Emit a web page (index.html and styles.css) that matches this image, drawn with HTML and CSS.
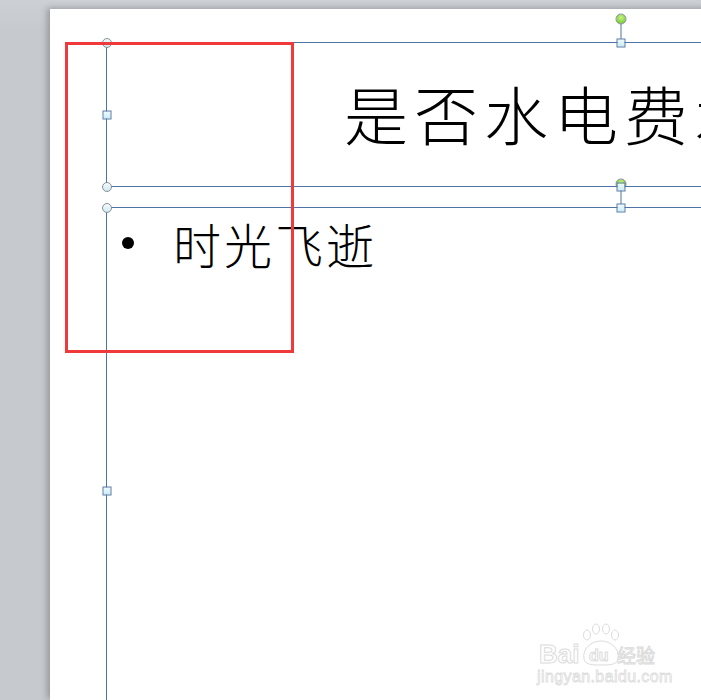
FILE: index.html
```html
<!DOCTYPE html>
<html lang="zh-CN">
<head>
<meta charset="utf-8">
<title>Slide editor</title>
<link rel="stylesheet" href="styles.css">
</head>
<body>
<div class="workspace">
  <div class="slide">
    <div class="placeholder title-box">
      <div class="title-text">是否水电费水电费</div>
      <span class="connector conn-title"></span>
      <span class="handle rot rot-title"></span>
      <span class="handle circ h-tl"></span>
      <span class="handle sq h-tm"></span>
      <span class="handle sq h-ml"></span>
      <span class="handle circ h-bl"></span>
      <span class="handle sq h-bm"></span>
    </div>
    <div class="placeholder body-box">
      <div class="bullet-row">
        <span class="bullet"></span>
        <span class="bullet-text">时光飞逝</span>
      </div>
      <span class="connector conn-body"></span>
      <span class="handle rot rot-body"></span>
      <span class="handle circ b-tl"></span>
      <span class="handle sq b-tm"></span>
      <span class="handle sq b-ml"></span>
    </div>
    <div class="highlight"></div>
  </div>
  <svg class="watermark" width="140" height="76" viewBox="0 0 140 76">
    <g fill="#ffffff" stroke="#dcdcdc" stroke-width="1">
      <ellipse cx="52" cy="14" rx="3.5" ry="5"/>
      <ellipse cx="61" cy="8" rx="3.5" ry="5"/>
      <ellipse cx="71" cy="8" rx="3.5" ry="5"/>
      <ellipse cx="80" cy="14" rx="3.5" ry="5"/>
      <path d="M49 38 C47 28 56 20 66 20 C76 20 85 28 83 38 C82 44 74 44 66 44 C58 44 50 44 49 38 Z"/>
      <text x="4" y="42" font-family="Liberation Sans, sans-serif" font-size="26" font-weight="bold">Bai</text>
      <text x="54" y="40" font-family="Liberation Sans, sans-serif" font-size="16" font-weight="bold">du</text>
      <text x="82" y="42" font-family="Noto Sans CJK SC, sans-serif" font-size="19">经验</text>
      <text x="2" y="61" font-family="Liberation Sans, sans-serif" font-size="16" stroke-width="0.8" letter-spacing="0.4">jingyan.baidu.com</text>
    </g>
  </svg>
</div>
</body>
</html>
```
FILE: styles.css
```css
html, body {
  margin: 0;
  padding: 0;
}
body {
  width: 701px;
  height: 700px;
  overflow: hidden;
  background: #c7cacf;
  font-family: "Noto Sans CJK SC", "Noto Sans", sans-serif;
}
.workspace {
  position: relative;
  width: 701px;
  height: 700px;
  overflow: hidden;
  background: linear-gradient(to bottom, #cdd0d4 0px, #c6c9cd 30px, #c6c9cd 100%);
}
.slide {
  position: relative;
  margin: 9px 0 0 50px;
  width: 700px;
  height: 691px;
  padding: 33px 0 0 56px;
  box-sizing: border-box;
  background: #ffffff;
  box-shadow: -3px -1px 6px rgba(60, 64, 70, 0.35);
}
.placeholder {
  position: relative;
  width: 800px;
  border-left: 1px solid #4e74a6;
  border-top: 1px solid #4e74a6;
}
.title-box {
  height: 143px;
  border-bottom: 1px solid #4e74a6;
  display: flex;
  align-items: center;
  z-index: 2;
}
.title-text {
  padding-left: 237px;
  font-size: 64px;
  letter-spacing: 6px;
  font-weight: 300;
  line-height: 1;
  color: #000;
  white-space: nowrap;
  margin-top: -6px;
}
.body-box {
  margin-top: 20px;
  height: 500px;
}
.bullet-row {
  display: flex;
  align-items: center;
  padding: 5px 0 0 15px;
  height: 60px;
}
.bullet {
  width: 12px;
  height: 12px;
  border-radius: 50%;
  background: #000;
  margin-right: 39px;
  flex: none;
}
.bullet-text {
  font-size: 48px;
  letter-spacing: 3px;
  font-weight: 300;
  line-height: 60px;
  color: #000;
  white-space: nowrap;
}
.handle {
  position: absolute;
  box-sizing: border-box;
  transform: translate(-50%, -50%);
}
.sq {
  width: 9px;
  height: 9px;
  border: 1px solid #5a7ca6;
  background: linear-gradient(to bottom, #f0fafc, #c9ecf5);
}
.circ {
  width: 10px;
  height: 10px;
  border-radius: 50%;
  border: 1px solid #8a8f95;
  background: linear-gradient(to bottom, #f4fbfc, #cdebf2);
}
.rot {
  width: 11px;
  height: 11px;
  border-radius: 50%;
  border: 1px solid #8a8f95;
  background: radial-gradient(circle at 50% 35%, #c9f28a, #7fd23a 70%);
}
.connector {
  position: absolute;
  width: 2px;
  background: #a9b9ca;
}
.h-tl { left: -0.5px; top: -0.5px; }
.h-tm { left: 513.5px; top: -0.5px; }
.h-ml { left: -0.5px; top: 71.5px; }
.h-bl { left: -0.5px; top: 143.5px; }
.h-bm { left: 513.5px; top: 143.5px; z-index: 5; }
.rot-title { left: 513.5px; top: -24.5px; }
.conn-title { left: 512.5px; top: -20px; height: 16px; }
.b-tl { left: -0.5px; top: -0.5px; }
.b-tm { left: 513.5px; top: -0.5px; }
.b-ml { left: -0.5px; top: 282.5px; }
.rot-body { left: 513.5px; top: -24.5px; }
.conn-body { left: 512.5px; top: -20px; height: 16px; }
.highlight {
  position: absolute;
  left: 15px;
  top: 33px;
  width: 229px;
  height: 311px;
  box-sizing: border-box;
  border: 3px solid #f0393b;
  z-index: 10;
}
.watermark {
  position: absolute;
  left: 535px;
  top: 621px;
}
```
